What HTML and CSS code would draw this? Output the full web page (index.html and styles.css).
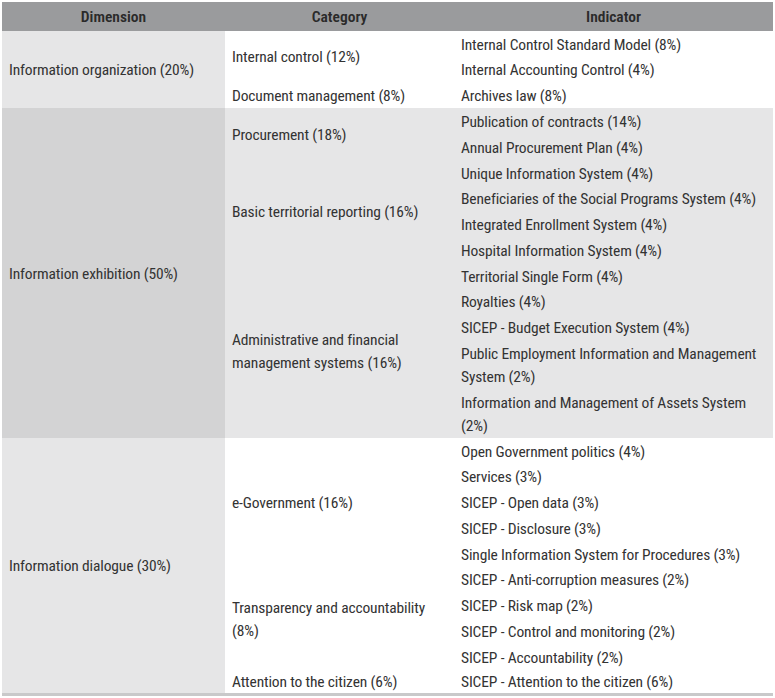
FILE: index.html
```html
<!DOCTYPE html>
<html>
<head>
<meta charset="utf-8">
<link rel="stylesheet" href="styles.css">
</head>
<body>
<table class="grid">
  <colgroup>
    <col class="c-dim">
    <col class="c-cat">
    <col class="c-ind">
  </colgroup>
  <thead>
    <tr class="head">
      <th>Dimension</th>
      <th>Category</th>
      <th>Indicator</th>
    </tr>
  </thead>
  <tbody class="sec sec-a">
    <tr>
      <td class="dim" rowspan="3">Information organization (20%)</td>
      <td class="cat" rowspan="2">Internal control (12%)</td>
      <td class="ind">Internal Control Standard Model (8%)</td>
    </tr>
    <tr><td class="ind">Internal Accounting Control (4%)</td></tr>
    <tr>
      <td class="cat">Document management (8%)</td>
      <td class="ind">Archives law (8%)</td>
    </tr>
  </tbody>
  <tbody class="sec sec-b">
    <tr>
      <td class="dim" rowspan="11">Information exhibition (50%)</td>
      <td class="cat" rowspan="2">Procurement (18%)</td>
      <td class="ind">Publication of contracts (14%)</td>
    </tr>
    <tr><td class="ind">Annual Procurement Plan (4%)</td></tr>
    <tr>
      <td class="cat" rowspan="4">Basic territorial reporting (16%)</td>
      <td class="ind">Unique Information System (4%)</td>
    </tr>
    <tr><td class="ind">Beneficiaries of the Social Programs System (4%)</td></tr>
    <tr><td class="ind">Integrated Enrollment System (4%)</td></tr>
    <tr><td class="ind">Hospital Information System (4%)</td></tr>
    <tr>
      <td class="cat" rowspan="5">Administrative and financial management systems (16%)</td>
      <td class="ind">Territorial Single Form (4%)</td>
    </tr>
    <tr><td class="ind">Royalties (4%)</td></tr>
    <tr><td class="ind">SICEP - Budget Execution System (4%)</td></tr>
    <tr><td class="ind">Public Employment Information and Management System (2%)</td></tr>
    <tr><td class="ind">Information and Management of Assets System (2%)</td></tr>
  </tbody>
  <tbody class="sec sec-c">
    <tr>
      <td class="dim" rowspan="10">Information dialogue (30%)</td>
      <td class="cat" rowspan="5">e-Government (16%)</td>
      <td class="ind">Open Government politics (4%)</td>
    </tr>
    <tr><td class="ind">Services (3%)</td></tr>
    <tr><td class="ind">SICEP - Open data (3%)</td></tr>
    <tr><td class="ind">SICEP - Disclosure (3%)</td></tr>
    <tr><td class="ind">Single Information System for Procedures (3%)</td></tr>
    <tr>
      <td class="cat" rowspan="4">Transparency and accountability (8%)</td>
      <td class="ind">SICEP - Anti-corruption measures (2%)</td>
    </tr>
    <tr><td class="ind">SICEP - Risk map (2%)</td></tr>
    <tr><td class="ind">SICEP - Control and monitoring (2%)</td></tr>
    <tr><td class="ind">SICEP - Accountability (2%)</td></tr>
    <tr class="last">
      <td class="cat">Attention to the citizen (6%)</td>
      <td class="ind">SICEP - Attention to the citizen (6%)</td>
    </tr>
  </tbody>
</table>
</body>
</html>
```
FILE: styles.css
```css
html, body {
  margin: 0;
  padding: 0;
  background: #ffffff;
}

body {
  padding: 2px 2px 0 2px;
  font-family: Roboto, "Liberation Sans", sans-serif;
  font-stretch: 75%;
  font-size: 15.5px;
  letter-spacing: -0.15px;
  font-weight: 420;
  color: #333333;
}

.grid {
  width: 771px;
  border-collapse: collapse;
  table-layout: fixed;
  border-bottom: 3px solid #c9c9ca;
}

.c-dim { width: 223px; }
.c-cat { width: 229px; }
.c-ind { width: 319px; }

.head th {
  height: 28px;
  padding: 1px 0 0 0;
  background: #9a9b9d;
  color: #2a2a2a;
  font-weight: 650;
  letter-spacing: 0;
  text-align: center;
  vertical-align: middle;
  line-height: 27px;
}

td {
  padding: 2.6px 8px 0.2px 7px;
  line-height: 23px;
  vertical-align: middle;
  text-align: left;
}

.last td {
  line-height: 21px;
  padding-top: 1.6px;
  padding-bottom: 0;
}

.sec-a .dim { background: #e6e6e7; }
.sec-a .cat, .sec-a .ind { background: #ffffff; }

.sec-b .dim { background: #d3d3d4; }
.sec-b .cat, .sec-b .ind { background: #e6e6e7; }

.sec-c .dim { background: #e6e6e7; }
.sec-c .cat, .sec-c .ind { background: #ffffff; }
```
